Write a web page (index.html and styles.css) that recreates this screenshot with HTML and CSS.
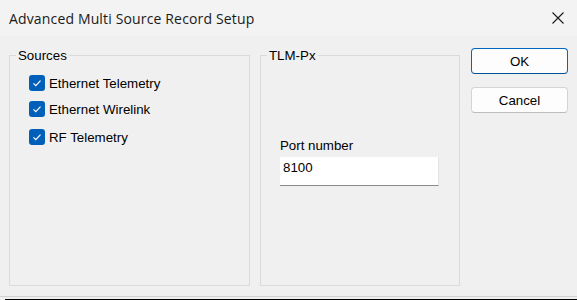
FILE: index.html
```html
<!DOCTYPE html>
<html>
<head>
<meta charset="utf-8">
<link rel="stylesheet" href="styles.css">
</head>
<body>
<div class="window">
  <header class="titlebar">
    <span class="title">Advanced Multi Source Record Setup</span>
    <svg class="close" width="12" height="12" viewBox="0 0 12 12"><path d="M0.5 0.5 L11.5 11.5 M11.5 0.5 L0.5 11.5" stroke="#1a1a1a" stroke-width="1.1" fill="none"/></svg>
  </header>
  <main class="content">
    <fieldset class="group sources">
      <legend>Sources</legend>
      <div class="checks">
        <label class="check"><span class="box"><svg width="16" height="16" viewBox="0 0 16 16"><path d="M4.5 8.3 L6.8 10.6 L11.5 5.6" stroke="#fff" stroke-width="1.2" fill="none"/></svg></span>Ethernet Telemetry</label>
        <label class="check"><span class="box"><svg width="16" height="16" viewBox="0 0 16 16"><path d="M4.5 8.3 L6.8 10.6 L11.5 5.6" stroke="#fff" stroke-width="1.2" fill="none"/></svg></span>Ethernet Wirelink</label>
        <label class="check third"><span class="box"><svg width="16" height="16" viewBox="0 0 16 16"><path d="M4.5 8.3 L6.8 10.6 L11.5 5.6" stroke="#fff" stroke-width="1.2" fill="none"/></svg></span>RF Telemetry</label>
      </div>
    </fieldset>
    <fieldset class="group tlm">
      <legend>TLM-Px</legend>
      <div class="field">
        <div class="label">Port number</div>
        <div class="input">8100</div>
      </div>
    </fieldset>
    <div class="buttons">
      <button class="btn primary">OK</button>
      <button class="btn">Cancel</button>
    </div>
  </main>
  <div class="edge"></div>
  <div class="edge-dark"></div>
</div>
</body>
</html>
```
FILE: styles.css
```css
html, body {
  margin: 0;
  padding: 0;
}
body {
  width: 577px;
  height: 300px;
  overflow: hidden;
  background: #f0f0f0;
  font-family: "Liberation Sans", Arial, sans-serif;
  font-size: 13.3px;
  color: #000;
}
.titlebar {
  height: 36px;
  box-sizing: border-box;
  background: #f3f3f3;
  display: flex;
  align-items: center;
  justify-content: space-between;
  padding: 0 13px 0 9px;
}
.title {
  font-family: "Open Sans", "Noto Sans", sans-serif;
  font-size: 14px;
  letter-spacing: 0.15px;
  color: #1a1a1a;
}
.close {
  display: block;
}
.content {
  display: flex;
  align-items: flex-start;
  padding: 12px 0 0 9px;
}
.group {
  margin: 0;
  padding: 0;
  border: 1px solid #dadada;
  box-sizing: border-box;
  height: 238px;
  min-width: 0;
}
.group legend {
  margin-left: 6px;
  padding: 0 2px;
  line-height: 15px;
  font-size: 13.3px;
}
.sources {
  width: 241px;
}
.tlm {
  width: 200px;
  margin-left: 10px;
}
.checks {
  display: flex;
  flex-direction: column;
  padding: 12px 0 0 19px;
  gap: 10px;
}
.check {
  display: flex;
  align-items: center;
  height: 16px;
  line-height: 15px;
}
.check.third {
  margin-top: 2px;
}
.box {
  width: 16px;
  height: 16px;
  border-radius: 3px;
  background: #005fb8;
  margin-right: 4px;
  display: block;
}
.box svg {
  display: block;
}
.field {
  padding: 75px 0 0 19px;
}
.label {
  line-height: 15px;
}
.input {
  margin-top: 4px;
  width: 159px;
  height: 29px;
  box-sizing: border-box;
  background: #fff;
  border-bottom: 1px solid #8a8a8a;
  border-right: 1px solid #e4e4e4;
  padding: 3px 3px;
  line-height: 15px;
}
.buttons {
  display: flex;
  flex-direction: column;
  gap: 13px;
  margin-left: 11px;
}
.btn {
  width: 97px;
  height: 26px;
  box-sizing: border-box;
  background: #fdfdfd;
  border: 1px solid #d4d4d4;
  border-bottom-color: #bcbcbc;
  border-radius: 4px;
  font-family: "Liberation Sans", Arial, sans-serif;
  font-size: 13.3px;
  color: #000;
  padding: 0;
}
.btn.primary {
  border-color: #0067c0;
  border-bottom-color: #00509a;
}
.edge {
  margin-top: 10px;
  height: 1px;
  background: #d2d2d2;
}
.edge-dark {
  margin: 2px 0 0 5px;
  height: 2px;
  background: #000;
}
```
